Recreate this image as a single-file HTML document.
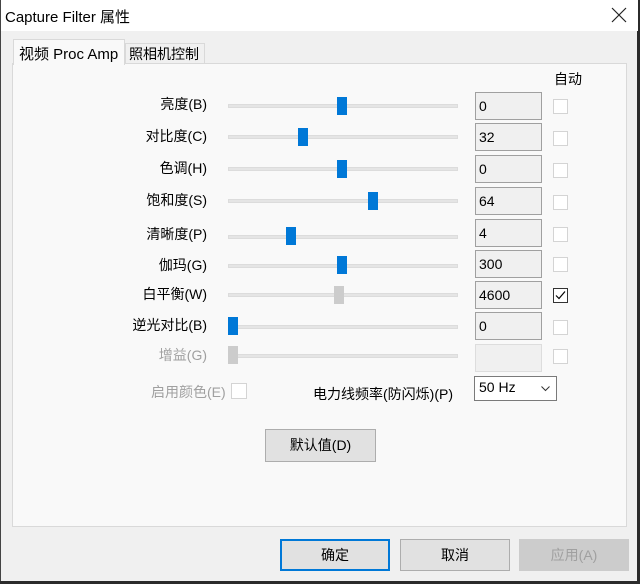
<!DOCTYPE html>
<html><head><meta charset="utf-8"><style>
*{box-sizing:border-box;margin:0;padding:0}
body{width:640px;height:584px;background:#2b2b2b;font-family:"Liberation Sans","Noto Sans CJK SC",sans-serif;font-size:14px;color:#000;position:relative;overflow:hidden}
.win{position:absolute;left:0;top:0;width:637px;height:581px;background:#f0f0f0;border-left:1px solid #444}
.title{position:absolute;left:0;top:0;width:637px;height:31px;background:#fff}
.title span{position:absolute;left:4px;top:6px;font-size:15px}
.a{position:absolute}
.panel{left:11px;top:63px;width:615px;height:464px;border:1px solid #d9d9d9;background:#f9f9f9}
.tab{border:1px solid #d9d9d9;border-bottom:none;background:#f0f0f0;padding:1px 3px}
.lbl{width:206px;text-align:right;font-size:14px}
.track{left:227px;width:230px;height:4px;background:#e5e5e5;border:1px solid #dcdcdc}
.th{width:10px;height:18px;background:#0078d7}
.th.g{background:#ccc}
.ed{left:474px;width:67px;height:28px;border:1px solid #a0a0a0;background:#f0f0f0;padding:5px 3px 0;font-size:14px}
.cb{left:552px;width:15px;height:15px;border:1px solid #d4d4d4;background:#fff}
.btn{border:1px solid #adadad;background:#e1e1e1;text-align:center;font-size:14px}
.dis{color:#a0a0a0}
</style></head><body>
<div class="win">
<div class="title"><span>Capture Filter 属性</span><svg class="a" style="left:610px;top:7px" width="16" height="16"><path d="M1 1L15 15M15 1L1 15" stroke="#222" stroke-width="1.2"/></svg></div>
<div class="a panel"></div>
<div class="a tab" style="left:12px;top:39px;width:112px;height:26px;background:#f9f9f9;font-size:15px;padding:3px 5px">视频 Proc Amp</div>
<div class="a tab" style="left:124px;top:43px;width:80px;height:20px;padding:0 3px">照相机控制</div>
<div class="a" style="left:553px;top:69px">自动</div>

<div class="a lbl" style="top:94px;left:0">亮度(B)</div>
<div class="a lbl" style="top:126px;left:0">对比度(C)</div>
<div class="a lbl" style="top:158px;left:0">色调(H)</div>
<div class="a lbl" style="top:190px;left:0">饱和度(S)</div>
<div class="a lbl" style="top:224px;left:0">清晰度(P)</div>
<div class="a lbl" style="top:255px;left:0">伽玛(G)</div>
<div class="a lbl" style="top:284px;left:0">白平衡(W)</div>
<div class="a lbl" style="top:315px;left:0">逆光对比(B)</div>
<div class="a lbl dis" style="top:345px;left:0">增益(G)</div>

<div class="a track" style="top:104px"></div><div class="a th" style="left:336px;top:97px"></div>
<div class="a track" style="top:135px"></div><div class="a th" style="left:297px;top:128px"></div>
<div class="a track" style="top:167px"></div><div class="a th" style="left:336px;top:160px"></div>
<div class="a track" style="top:199px"></div><div class="a th" style="left:367px;top:192px"></div>
<div class="a track" style="top:235px"></div><div class="a th" style="left:285px;top:227px"></div>
<div class="a track" style="top:264px"></div><div class="a th" style="left:336px;top:256px"></div>
<div class="a track" style="top:293px"></div><div class="a th g" style="left:333px;top:286px"></div>
<div class="a track" style="top:325px"></div><div class="a th" style="left:227px;top:317px"></div>
<div class="a track" style="top:354px"></div><div class="a th g" style="left:227px;top:346px"></div>

<div class="a ed" style="top:92px">0</div>
<div class="a ed" style="top:123px">32</div>
<div class="a ed" style="top:155px">0</div>
<div class="a ed" style="top:187px">64</div>
<div class="a ed" style="top:219px">4</div>
<div class="a ed" style="top:250px">300</div>
<div class="a ed" style="top:281px">4600</div>
<div class="a ed" style="top:312px">0</div>
<div class="a ed" style="top:344px;border-color:#ddd"></div>

<div class="a cb" style="top:99px"></div>
<div class="a cb" style="top:131px"></div>
<div class="a cb" style="top:163px"></div>
<div class="a cb" style="top:195px"></div>
<div class="a cb" style="top:227px"></div>
<div class="a cb" style="top:257px"></div>
<div class="a cb" style="top:288px;border-color:#333"><svg width="13" height="13" style="position:absolute;left:0;top:0"><path d="M2 6.5 L5 9.5 L11 2.5" stroke="#000" stroke-width="1.2" fill="none"/></svg></div>
<div class="a cb" style="top:320px"></div>
<div class="a cb" style="top:349px"></div>

<div class="a dis" style="left:150px;top:382px">启用颜色(E)</div>
<div class="a cb" style="left:230px;top:383px;width:16px;height:16px"></div>
<div class="a" style="left:312px;top:384px">电力线频率(防闪烁)(P)</div>
<div class="a" style="left:473px;top:376px;width:83px;height:25px;border:1px solid #7a7a7a;background:#fff;padding:2px 4px">50 Hz<svg class="a" style="left:66px;top:9px" width="9" height="6"><path d="M0.5 0.5L4.5 4.5L8.5 0.5" stroke="#333" fill="none"/></svg></div>

<div class="a btn" style="left:264px;top:429px;width:111px;height:33px;line-height:31px">默认值(D)</div>
<div class="a btn" style="left:279px;top:539px;width:110px;height:32px;line-height:29px;border:2px solid #0078d7">确定</div>
<div class="a btn" style="left:399px;top:539px;width:110px;height:32px;line-height:30px">取消</div>
<div class="a btn dis" style="left:518px;top:539px;width:110px;height:32px;line-height:30px;border-color:#ccc;background:#ccc">应用(A)</div>
</div>
</body></html>
